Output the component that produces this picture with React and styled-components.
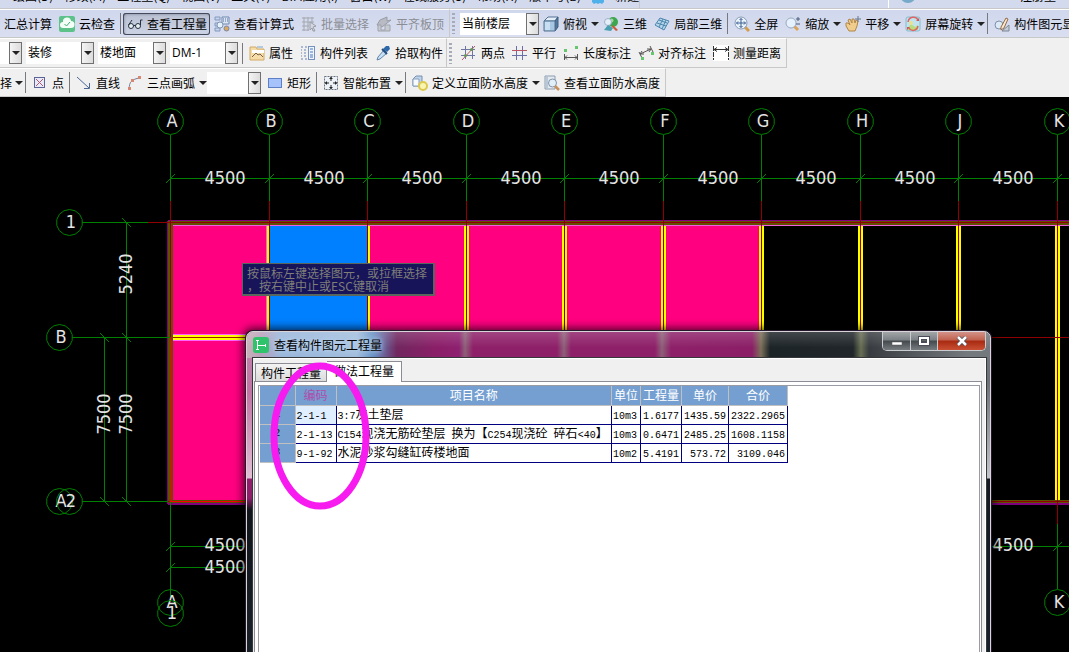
import React, { useState } from 'react'
import styled, { createGlobalStyle, css } from 'styled-components'

const GlobalStyle = createGlobalStyle`
    * {
        box-sizing: border-box;
    }

    body {
        margin: 0;
        overflow: hidden;
        background-color: #000;
        color: #000;
        font-family: "Noto Sans CJK SC", sans-serif;
        font-size: 12px;
        line-height: 16px;
    }

    button, select {
        font: inherit;
        color: inherit;
    }
`

const Page = styled.div`
    display: flex;
    flex-direction: column;
    height: 100vh;
`

const MenuBar = styled.nav`
    display: flex;
    align-items: stretch;
    height: 9px;
    overflow: hidden;
    background-color: #d4daed;
    border-bottom: 1px solid #c8c8c8;
`

const MenuGroup = styled.div`
    display: flex;
    align-items: flex-end;
    gap: 11px;
    padding: 0 0 4px 13px;
    border-right: 1px solid #c8c8c8;
`

const SideMenu = styled.div`
    display: flex;
    align-items: flex-end;
    gap: 104px;
    margin-left: auto;
    padding: 0 13px 4px 11px;
    border-left: 1px solid #fff;
`

const MenuItem = styled.a`
    color: #000;
    text-decoration: none;
    white-space: nowrap;
`

const ToolRow = styled.div`
    display: flex;
    flex: none;
    height: ${props => props.$tall ? '30px' : '29px'};
    overflow: hidden;
    background: ${props => props.$blue ? 'linear-gradient(#cfd7ed, #dadff0)' : '#f0f0f0'};
`

const ToolGroup = styled.div`
    display: flex;
    flex: none;
    align-items: center;
    padding-right: ${props => props.$end || '2px'};
    border-top: 1px solid #fff;
    border-right: 1px solid #c8c8c8;
    border-bottom: 1px solid #c8c8c8;
`

const Grip = styled.div`
    width: 3px;
    height: 21px;
    margin: 0 5px 0 2px;
    background: repeating-linear-gradient(#a5abb8 0 2px, transparent 2px 4px);
`

const Separator = styled.div`
    width: 1px;
    height: 21px;
    margin: 0 2px;
    background-color: #77797f;
`

const ToolButton = styled.button`
    display: flex;
    flex: none;
    align-items: center;
    gap: 4px;
    height: 22px;
    padding: 0 3px 0 4px;
    border: none;
    border-radius: 3px;
    background: none;
    white-space: nowrap;

    ${props => props.$menu && css`
        padding-right: 0;
    `}

    ${props => props.disabled && css`
        color: #8b8d94;
    `}

    ${props => props.$pressed && css`
        background: linear-gradient(#b9c0d2, #cdd4e6);
        box-shadow: inset 0 0 0 1px #454b5a, inset 1px 1px 3px #7d8496;
    `}
`

const EdgeButton = styled(ToolButton)`
    gap: 3px;
    margin-left: -16px;
`

const Arrow = styled.span`
    border: 4px solid transparent;
    border-top-color: #222;
    border-bottom: none;
`

const SelectBox = styled.span`
    position: relative;
    display: flex;
    flex: none;
    width: ${props => props.$width || '68px'};
    height: 22px;
    margin-right: ${props => props.$gap || '4px'};
    background-color: #fff;
`

const Select = styled.select`
    appearance: none;
    width: 100%;
    padding: 0 14px 0 2px;
    border: none;
    background: none;
    font-family: "Open Sans", "Noto Sans CJK SC", sans-serif;
    outline: none;
`

const SelectArrow = styled.span`
    position: absolute;
    top: 0;
    right: 0;
    bottom: 0;
    display: flex;
    align-items: center;
    justify-content: center;
    width: 13px;
    border: 1px solid #707070;
    background: linear-gradient(90deg, #f4f4f4, #dcdcdc);
    pointer-events: none;
`

const Canvas = styled.main`
    position: relative;
    flex: 1;
    overflow: hidden;
    background-color: #000;
`

const Drawing = styled.svg`
    display: block;
    width: 100%;
    height: 100%;
    font-family: "DejaVu Sans Condensed", "DejaVu Sans", sans-serif;
    font-size: 18px;
`

const Hint = styled.div`
    position: absolute;
    left: 242px;
    top: 166px;
    padding: 2px 6px 2px 4px;
    border: 1px solid #59665e;
    border-right-width: 2px;
    border-bottom-width: 2px;
    background-color: #18145a;
    color: #7f7f78;
    line-height: 13px;
    white-space: pre;
`

const Dialog = styled.section`
    position: absolute;
    left: 246px;
    right: 78px;
    top: 234px;
    bottom: -10px;
    display: flex;
    flex-direction: column;
    padding: 0 4px 0 6px;
    border: 1px solid #d9d4da;
    border-radius: 7px 7px 0 0;
    background:
        linear-gradient(#bf86ad, #c074a3 60px, #e2bfd5 146px, #8f1f6b 147px, #8f1f6b 166px, #10151b 178px, #1a2229) 0 0 / 7px 100% no-repeat,
        linear-gradient(#777c80, #6b7175 50px, #c3c6c8 146px, #131a20 147px, #18222b) 100% 0 / 6px 100% no-repeat,
        #6b7074;
    box-shadow: 0 0 0 1px #24182a, 0 0 9px 3px rgba(0, 0, 0, .7);
`

const TitleBar = styled.header`
    display: flex;
    align-items: flex-start;
    height: 26px;
    margin: 0 -4px 0 -6px;
    border-radius: 6px 6px 0 0;
    background:
        linear-gradient(rgba(255, 255, 255, .16), rgba(255, 255, 255, 0) 60%),
        linear-gradient(90deg, #c8b0b8 0, #b9a0bb 14px, #98b5da 34px, #a2bddd 110px, #648fc4 126px, #71275f 150px,
            #8b1e68 190px, #8e2070 212px, #8d6078 218px, #8e2069 226px, #8e2069 310px, #8d6078 317px, #8e2069 324px,
            #8e2069 408px, #8d6078 415px, #8e2069 424px, #8b1e66 505px, #7b7059 514px, #1d2428 523px, #20262a 606px,
            #686f54 614px, #383c40 622px, #74797d 720px);
`

const TitleIcon = styled.svg`
    width: 16px;
    height: 16px;
    margin: 5px 5px 0 6px;
`

const Title = styled.h1`
    flex: 1;
    margin: 5px 0 0;
    font-size: 12px;
    font-weight: 400;
    text-shadow: 0 0 5px #c9def2, 0 0 8px #b6d2ef;
`

const WindowButtons = styled.div`
    display: flex;
    height: 19px;
    margin-right: 4px;
    border: 1px solid #c9cdd0;
    border-top: none;
    border-radius: 0 0 5px 5px;
    overflow: hidden;
`

const WindowButton = styled.button`
    display: flex;
    align-items: center;
    justify-content: center;
    width: ${props => props.$close ? '48px' : '27px'};
    padding: 0;
    border: none;
    border-left: ${props => props.$first ? 'none' : '1px solid #c9cdd0'};
    background: ${props => props.$close
        ? 'linear-gradient(#d39388, #c0614e 45%, #a82a10 50%, #c95034)'
        : 'linear-gradient(#a2a6a9, #7b8084 45%, #44494e 50%, #777c80)'};
`

const DialogBody = styled.div`
    display: flex;
    flex: 1;
    flex-direction: column;
    padding: 2px 3px 0 0;
    border: 1px solid #fff;
    border-left-color: #eee;
    outline: 1px solid #35373b;
    background-color: #f0f0f0;
`

const Tabs = styled.div`
    display: flex;
    align-items: flex-end;
    height: 20px;
    padding-left: 1px;
`

const Tab = styled.button`
    height: ${props => props.$active ? '21px' : '18px'};
    margin-bottom: ${props => props.$active ? '-1px' : '0'};
    padding: ${props => props.$active ? '0 7px 2px' : '0 5px'};
    border: 1px solid #8c8c94;
    border-left-width: ${props => props.$active ? '0' : '1px'};
    border-bottom: none;
    background: ${props => props.$active ? '#fff' : 'linear-gradient(#f3f3f3, #dcdcdc)'};
    line-height: 16px;
    z-index: ${props => props.$active ? 1 : 0};
`

const Pane = styled.div`
    flex: 1;
    padding: 3px 1px 0 3px;
    border: 1px solid #8c8c94;
    background-color: #fff;
`

const GridFrame = styled.div`
    height: 100%;
    padding: 0 1px;
    border: 1px solid #9b9ba3;
`

const Table = styled.table`
    border-collapse: collapse;
    table-layout: fixed;
    width: 528px;
`

const HeadCell = styled.th`
    height: 19px;
    padding: 0;
    border-right: 1px solid #c0c0c0;
    border-bottom: 1px solid #c0c0c0;
    background-color: #759fd1;
    color: ${props => props.$marked ? '#b04cab' : '#fff'};
    font-weight: 400;
    line-height: 18px;
    white-space: nowrap;
`

const RowHead = styled(HeadCell)`
    color: #000;
    font-family: "Liberation Mono", monospace;
    font-size: 10px;
`

const Cell = styled.td`
    height: 19px;
    padding: 0 2px 2px 1px;
    border-right: 1px solid #000080;
    border-bottom: 1px solid #000080;
    background-color: ${props => props.$selected ? '#e0efff' : '#fff'};
    line-height: 16px;
    text-align: ${props => props.$right ? 'right' : 'left'};
    white-space: pre;
`

const Mono = styled.span`
    font-family: "Liberation Mono", monospace;
    font-size: 10px;
    line-height: 10px;
`

const Marker = styled.svg`
    position: absolute;
    left: 270px;
    top: 265px;
    z-index: 2;
    width: 100px;
    height: 148px;
    pointer-events: none;
`

const icons = {
    cloud: <><rect width="16" height="16" rx="2" fill="#5cc28a" /><path d="M4 12a3 3 0 0 1 0-6 4 4 0 0 1 8-1 3.500 3.500 0 0 1 0 7z" fill="#f4fff8" /><path d="M5.500 8l2 2 3.500-4" stroke="#42ad75" fill="none" /></>,
    glasses: <><circle cx="4" cy="10" r="2.500" fill="#e8f2f5" stroke="#27303d" /><circle cx="11" cy="10" r="2.500" fill="#e8f2f5" stroke="#27303d" /><path d="M6.500 9.500h2M1.500 9L5 4M13.500 9V4h2" stroke="#27303d" fill="none" /></>,
    formula: <><path d="M1 1h5v3H1zM1 7h3v3H1zM1 12h5v3H1z" fill="#c5d4ea" stroke="#8298bd" /><path d="M8 1h7v7H8z" fill="#dce6f4" stroke="#6f88ae" /><path d="M9 3h5M9 5h5" stroke="#536f9c" strokeDasharray="1 1" /><circle cx="6" cy="9" r="3" fill="#e6f2fa" stroke="#7f97b7" /><circle cx="12.500" cy="12.500" r="2.500" fill="#d9a861" stroke="#7d89a0" /></>,
    batch: <><path d="M1 2h12M1 6h12M1 10h7M1 14h7M3 1v14M7 1v14M11 1v6" stroke="#a4a7af" fill="none" /><path d="M9 6l6 4-3 1 2 4-2 0-1-3-2 2z" fill="#d5d8e0" stroke="#9a9da5" /></>,
    align: <><path d="M1 9l3-5 7-3v4l4-1-9 7z" fill="#b8bbc3" stroke="#9a9da5" /><path d="M2 15V9h3v5h4V9h5v6z" fill="#c7cad2" stroke="#a0a3ab" /></>,
    cube: <><path d="M1 5l4-4h10l-3 4z" fill="#e2effb" stroke="#54708f" /><path d="M12 5l3-4v10l-3 4z" fill="#4f789f" stroke="#3f5f80" /><path d="M1 5h11v10H1z" fill="#a6c6e4" stroke="#54708f" /><path d="M2 6h5v8H2z" fill="#c8def2" /></>,
    three: <><circle cx="10" cy="6" r="5" fill="#3ea650" /><circle cx="8.500" cy="4.500" r="2" fill="#9ddc98" /><circle cx="5" cy="6" r="3.500" fill="#e6eef8" stroke="#9db1c8" /><path d="M1 14l4-5 5 3-2 3z" fill="#4b9fb0" /><path d="M10 9l5 5-2 1-4-4z" fill="#cb5c36" /></>,
    partial: <><path d="M1 9l5-7 9 3-5 9z" fill="#b4d5ea" stroke="#4e86ad" /><path d="M3 7l9 3M5 4l8 3M9 3l-4 8M12 4l-4 9" stroke="#4e86ad" fill="none" /></>,
    full: <><path d="M11 11l4 4" stroke="#d49c4f" strokeWidth="3" /><circle cx="7" cy="7" r="6" fill="#e9f4fd" stroke="#8b9cb5" /><path d="M7 2.500v9M2.500 7h9M5.500 4L7 2.500 8.500 4M5.500 10L7 11.500 8.500 10M4 5.500L2.500 7 4 8.500M10 5.500L11.500 7 10 8.500" stroke="#3d5f91" fill="none" /></>,
    zoom: <><path d="M9 10l4 4" stroke="#d9a45c" strokeWidth="3" /><circle cx="6" cy="7" r="5" fill="#e5f1fc" stroke="#9ba9bd" /><path d="M11 3h4M13 1v4M11 8h4" stroke="#4b5c78" /></>,
    pan: <><path d="M4 15L1 10l0-3 2 0 2 2-2-5 2-1 2 4 0-4 2 0 1 4 1-3 2 1-1 5-2 5z" fill="#f0cd8c" stroke="#b18647" /><path d="M10 3h6M13 0v6" stroke="#66768f" /></>,
    rotate: <><rect x="1" y="1" width="14" height="14" rx="2" fill="#bfe3ef" stroke="#82bdd0" /><path d="M2 13l4-5 4 3 3-2v5H2z" fill="#b9dc7d" /><circle cx="6" cy="7" r="2" fill="#efe08c" /><path d="M3 6c1-6 8-6 10-2M13 10c-1 5-7 6-9 2" stroke="#e06464" fill="none" strokeWidth="1.500" /><path d="M11 5h3V2zM5 11H2v3z" fill="#d95353" /></>,
    show: <><circle cx="5" cy="9" r="4" fill="#dceaf7" stroke="#7e91aa" /><path d="M7 11l5-9 2 1-4 9-3 2z" fill="#f6e8cd" stroke="#956747" /><path d="M8 15h7V9z" fill="#c3ccd8" stroke="#7d8794" /></>,
    props: <><path d="M1 2h6l1 2h7v11H1z" fill="#f5dca8" stroke="#d1aa69" /><path d="M3 5h12v3H3z" fill="#fff" /><path d="M3 12l4-4 2 2 2-1 3 3" stroke="#75644c" fill="none" /><path d="M8 1h6v2H8z" fill="#b5cadf" /></>,
    list: <><path d="M1 2h2M5 2h2M1 5h1M1 8h1M1 11h1M1 14h2M5 14h2M4 5h2M4 8h2M4 11h2" stroke="#6483b3" /><rect x="8.500" y="1.500" width="6" height="13" fill="#eef5ff" stroke="#7890bc" /><path d="M10 4h3M10 7h3M10 10h3M10 12h3" stroke="#4878bd" /></>,
    picker: <><path d="M9 5l3 3-7 6-3 1 1-3z" fill="#c8e0f3" stroke="#6285ab" /><path d="M8 4l3-3 3 0 1 3-3 3z" fill="#2d69a9" /><path d="M7 4l5 5" stroke="#234f80" strokeWidth="2" /></>,
    twoPoint: <><path d="M4.500 1v13M11.500 1v13M0 4.500h14M0 10.500h14" stroke="#6f75a5" /><path d="M1 15L14 1" stroke="#bd5364" /><circle cx="4.500" cy="10.500" r="1.500" fill="#62984d" /><circle cx="10.500" cy="4.500" r="1.500" fill="#62984d" /></>,
    parallel: <><path d="M4.500 1v14M10.500 1v14" stroke="#6a70a7" /><path d="M0 5.500h15" stroke="#bc5363" /><path d="M0 10.500h15" stroke="#6a70a7" /></>,
    length: <><path d="M1.500 9v6M14.500 9v6M1 12.500h13M4 10.500l-2 2 2 2M12 10.500l2 2-2 2" stroke="#555" fill="none" /><path d="M1 4h3v3H1zM12 1h3v3h-3z" fill="#65c66d" /></>,
    alignDim: <><path d="M1 7l3 6M12 1l3 6M2 9l11-5M4 6L2 9l4 0M11 7l2-3-4 0" stroke="#555" fill="none" /><path d="M3 12h3v3H3zM13 7h3v3h-3z" fill="#65c66d" /></>,
    measure: <><rect width="16" height="16" fill="#fff" /><path d="M.500 1v14M15.500 1v14" stroke="#333" strokeDasharray="5 1" /><path d="M1 4.500h14M4 2.500l-3 2 3 2M12 2.500l3 2-3 2" stroke="#333" fill="none" /></>,
    point: <><rect x="2.500" y="2.500" width="10" height="10" fill="#e7eaf8" stroke="#5c6397" /><path d="M4 4l7 7M11 4l-7 7" stroke="#b2576c" /></>,
    line: <><path d="M1 2l12 11M13.500 8v5.500H8" stroke="#4e6696" fill="none" /></>,
    arc: <><path d="M2.500 14c-1-7 3-10 10-11" stroke="#737f95" fill="none" /><path d="M1 12h3v3H1zM4 4h3v3H4zM11 1h3v3h-3z" fill="#d78672" /></>,
    rect: <rect x="1.500" y="3.500" width="13" height="9" fill="#a6c2fa" stroke="#5d7fc5" />,
    smart: <><rect x="1.500" y="1.500" width="13" height="13" fill="#edf2f8" stroke="#68717e" strokeDasharray="2 1" /><path d="M8 2v4M8 10v4M2 8h4M10 8h4" stroke="#222" /><path d="M6 4l2-2 2 2zM6 12l2 2 2-2zM4 6L2 8l2 2zM12 6l2 2-2 2z" fill="#222" /></>,
    define: <><path d="M1 4l3-3h6v7l-3 3H1z" fill="#bfd4e8" stroke="#7590b1" /><path d="M1 4h6v7H1z" fill="#f7faff" stroke="#8aa0bc" /><circle cx="11" cy="11" r="4" fill="#f8f4b1" stroke="#dcc94c" strokeWidth="2" /></>,
    check: <><path d="M1 1h10v13H1z" fill="#e4eaf1" stroke="#8d9cae" /><path d="M2 2h2v11H2z" fill="#b9c8d9" /><circle cx="8.500" cy="8" r="4" fill="#e1eff9" stroke="#8293a8" /><path d="M11 11l4 4" stroke="#c99158" strokeWidth="2.500" /></>,
}

function Icon({ name }) {
    return <svg width="16" height="16" viewBox="0 0 16 16" aria-hidden="true">{icons[name]}</svg>
}

function Tool({ icon, label, menu, ...rest }) {
    return (
        <ToolButton type="button" $menu={menu} {...rest}>
            {icon && <Icon name={icon} />}
            {label}
            {menu && <Arrow />}
        </ToolButton>
    )
}

function Picker({ label, value, width, gap }) {
    return (
        <SelectBox $width={width} $gap={gap}>
            <Select aria-label={label} defaultValue={value}>
                <option value={value}>{value}</option>
            </Select>
            <SelectArrow><Arrow /></SelectArrow>
        </SelectBox>
    )
}

const menus = ['绘图(D)', '修改(M)', '工程量(Q)', '视图(V)', '工具(T)', 'BIM应用(I)', '窗口(W)', '在线服务(S)', '帮助(H)', '版本号(B)']

const axes = [
    { name: 'A', x: 170 }, { name: 'B', x: 269 }, { name: 'C', x: 367 }, { name: 'D', x: 466 }, { name: 'E', x: 564 },
    { name: 'F', x: 663 }, { name: 'G', x: 761 }, { name: 'H', x: 860 }, { name: 'J', x: 958 }, { name: 'K', x: 1057 },
]

const rows = [
    ['2-1-1', '3:7灰土垫层', '10m3', '1.6177', '1435.59', '2322.2965'],
    ['2-1-13', 'C154现浇无筋砼垫层 换为【C254现浇砼 碎石<40】', '10m3', '0.6471', '2485.25', '1608.1158'],
    ['9-1-92', '水泥砂浆勾缝缸砖楼地面', '10m2', '5.4191', '573.72', '3109.046'],
]

function Bubble({ x, y, children }) {
    const points = Array.from({ length: 14 }, (_, i) => {
        const a = (i * Math.PI) / 7 - Math.PI / 2
        return `${(x + 0.5 + 13 * Math.cos(a)).toFixed(1)},${(y + 0.5 + 13 * Math.sin(a)).toFixed(1)}`
    }).join(' ')
    return (
        <g>
            <polygon points={points} fill="none" stroke="#008000" />
            <text x={x + 2} y={y + 6} textAnchor="middle" fill="#e4e4e4">{children}</text>
        </g>
    )
}

function Dim({ x, y, children, vertical }) {
    return (
        <text x={x} y={y} textAnchor="middle" fill="#e4e4e4" transform={vertical ? `rotate(-90 ${x} ${y})` : undefined}>
            {children}
        </text>
    )
}

function Plan() {
    return (
        <Drawing role="img" aria-label="楼地面平面图">
            <g transform="translate(0 -97)">
                {/* rooms */}
                <path d="M171 223h591v280H171z" fill="#ff0080" />
                <path d="M269 223h98v280h-98z" fill="#0080ff" />

                {/* inner walls */}
                <path d="M171 334h591v7H171z" fill="#ff60ff" />
                <path d="M171 335h591v5H171z" fill="#ff0" />
                <path d="M171 337.500h591" stroke="#a02000" />
                <path d="M266 223h1v278h-1z" fill="#ff60ff" />
                <path d="M267 223h2v278h-2zM368 223h2v278h-2z" fill="#ff0" />
                {axes.slice(3).map(axis => (
                    <path key={axis.name} d={`M${axis.x - 2} 223h5v278h-5z`} fill="#ff0" />
                ))}

                {/* outer walls */}
                <path d="M168 220h901v1H168zM167 221h1v283h-1zM168 503h901v2H168z" fill="#800080" />
                <path d="M168 221h901v4H168zM168 221h5v282h-5zM168 500h901v3H168z" fill="#605000" />
                <path d="M173 225h896v1H173z" fill="#f060e0" />

                <path d="M148 222.500h921M991 337.500h78M168 501.500h901" stroke="#900000" />
                <path d="M170.500 337v165M171 501.500h80" stroke="#f00" />

                {/* axis bubbles and dimensions */}
                <path d="M170 178.500h899" stroke="#008000" />
                {axes.map(axis => (
                    <g key={axis.name}>
                        <path d={`M${axis.x + 0.5} 201v${axis.name === 'A' ? 136 : 300}`} stroke="#900000" />
                        <path d={`M${axis.x + 0.5} 135v66M${axis.x - 4} 183l9-9`} stroke="#008000" />
                        <Bubble x={axis.x} y={121}>{axis.name}</Bubble>
                    </g>
                ))}
                {axes.slice(0, -1).map(axis => <Dim key={axis.name} x={axis.x + 55} y={184}>4500</Dim>)}

                {/* left side */}
                <path d="M82 222.500h66M72 337.500h98M82 501.500h86M126.500 222v280M104.500 337v165" stroke="#008000" />
                <path d="M122 218l9 9M122 333l9 9M100 333l9 9M122 497l9 9M100 497l9 9" stroke="#008000" />
                <Bubble x={69} y={222}>1</Bubble>
                <Bubble x={59} y={337}>B</Bubble>
                <Bubble x={59} y={501}>A</Bubble>
                <Bubble x={69} y={501}>2</Bubble>
                <Dim x={132} y={274} vertical>5240</Dim>
                <Dim x={110} y={414} vertical>7500</Dim>
                <Dim x={132} y={414} vertical>7500</Dim>

                {/* bottom side */}
                <path d="M170.500 502v99M170 546.500h899M170 567.500h80M166 551l9-9M166 572l9-9" stroke="#008000" />
                <Dim x={225} y={551}>4500</Dim>
                <Dim x={225} y={573}>4500</Dim>
                <Bubble x={170} y={602}>A</Bubble>
                <Bubble x={170} y={613}>1</Bubble>
                <path d="M1057.500 501v23" stroke="#900000" />
                <path d="M1057.500 524v65M1053 551l9-9" stroke="#008000" />
                <Dim x={1013} y={551}>4500</Dim>
                <Bubble x={1057} y={602}>K</Bubble>
            </g>
        </Drawing>
    )
}

function MixedText({ children }) {
    return children.split(/([ -~]+)/).map((part, i) => (
        i % 2 ? <Mono key={i}>{part}</Mono> : part
    ))
}

function QuantityTable() {
    return (
        <Table>
            <colgroup>
                <col style={{ width: 35 }} />
                <col style={{ width: 41 }} />
                <col />
                <col style={{ width: 29 }} />
                <col style={{ width: 41 }} />
                <col style={{ width: 47 }} />
                <col style={{ width: 59 }} />
            </colgroup>
            <thead>
                <tr>
                    <HeadCell />
                    <HeadCell $marked>编码</HeadCell>
                    <HeadCell>项目名称</HeadCell>
                    <HeadCell>单位</HeadCell>
                    <HeadCell>工程量</HeadCell>
                    <HeadCell>单价</HeadCell>
                    <HeadCell>合价</HeadCell>
                </tr>
            </thead>
            <tbody>
                {rows.map((row, i) => (
                    <tr key={row[0]}>
                        <RowHead scope="row">{i + 1}</RowHead>
                        {row.map((value, col) => (
                            <Cell key={col} $right={col > 2} $selected={i === 0 && col === 0}>
                                <MixedText>{value}</MixedText>
                            </Cell>
                        ))}
                    </tr>
                ))}
            </tbody>
        </Table>
    )
}

function QuantityDialog() {
    const [tab, setTab] = useState(1)

    return (
        <Dialog role="dialog" aria-labelledby="dialog-title">
            <TitleBar>
                <TitleIcon viewBox="0 0 16 16" aria-hidden="true">
                    <rect width="16" height="16" rx="3" fill="#2fc36c" />
                    <path d="M4.500 3v10M3 3.500h3M3 12.500h3M5 8.500h7M12.500 7v3" stroke="#fff" fill="none" />
                </TitleIcon>
                <Title id="dialog-title">查看构件图元工程量</Title>
                <WindowButtons>
                    <WindowButton type="button" aria-label="最小化" $first>
                        <svg width="12" height="12"><path d="M1 7h10v3H1z" fill="#fff" stroke="#555" strokeWidth=".5" /></svg>
                    </WindowButton>
                    <WindowButton type="button" aria-label="最大化">
                        <svg width="12" height="10"><path d="M2 2h8v6H2z" fill="none" stroke="#4b4e5a" strokeWidth="4" /><path d="M2 2h8v6H2z" fill="none" stroke="#fff" strokeWidth="2" /></svg>
                    </WindowButton>
                    <WindowButton type="button" aria-label="关闭" $close>
                        <svg width="12" height="10"><path d="M2 1l8 8M10 1L2 9" stroke="#4b4e5a" strokeWidth="4" /><path d="M2 1l8 8M10 1L2 9" stroke="#fff" strokeWidth="2.500" /></svg>
                    </WindowButton>
                </WindowButtons>
            </TitleBar>
            <DialogBody>
                <Tabs role="tablist">
                    <Tab type="button" role="tab" aria-selected={tab === 0} $active={tab === 0} onClick={() => setTab(0)}>构件工程量</Tab>
                    <Tab type="button" role="tab" aria-selected={tab === 1} $active={tab === 1} onClick={() => setTab(1)}>做法工程量</Tab>
                </Tabs>
                <Pane>
                    <GridFrame>
                        <QuantityTable />
                    </GridFrame>
                </Pane>
            </DialogBody>
        </Dialog>
    )
}

function App() {
    return (
        <Page>
            <GlobalStyle />
            <MenuBar>
                <MenuGroup>
                    {menus.map(menu => <MenuItem key={menu} href="#">{menu}</MenuItem>)}
                    <svg width="12" height="12" aria-hidden="true"><path d="M0 0h12v10l-2 2-2-1-2 1-2-1-2 1-2-2z" fill="#4fb0ea" /></svg>
                    <MenuItem href="#">新建</MenuItem>
                </MenuGroup>
                <SideMenu>
                    <svg width="16" height="16" aria-hidden="true"><circle cx="8" cy="7" r="8" fill="#77a9c9" /></svg>
                    <MenuItem href="#">注册量</MenuItem>
                </SideMenu>
            </MenuBar>

            <ToolRow $blue>
                <ToolGroup>
                    <Tool label="汇总计算" />
                    <Tool icon="cloud" label="云检查" />
                    <Separator />
                    <Tool icon="glasses" label="查看工程量" $pressed aria-pressed="true" />
                    <Tool icon="formula" label="查看计算式" />
                    <Tool icon="batch" label="批量选择" disabled />
                    <Tool icon="align" label="平齐板顶" disabled />
                </ToolGroup>
                <ToolGroup>
                    <Grip />
                    <Picker label="楼层" value="当前楼层" width="79px" gap="0" />
                    <Tool icon="cube" label="俯视" menu />
                    <Tool icon="three" label="三维" />
                    <Tool icon="partial" label="局部三维" />
                    <Separator />
                    <Tool icon="full" label="全屏" />
                    <Tool icon="zoom" label="缩放" menu />
                    <Tool icon="pan" label="平移" menu />
                    <Tool icon="rotate" label="屏幕旋转" menu />
                    <Separator />
                    <Tool icon="show" label="构件图元显示设置" />
                </ToolGroup>
            </ToolRow>

            <ToolRow $tall>
                <ToolGroup $end="0">
                    <Picker label="当前层" value="" width="22px" />
                    <Picker label="构件类别" value="装修" />
                    <Picker label="构件类型" value="楼地面" />
                    <Picker label="构件" value="DM-1" gap="2px" />
                    <Separator />
                    <Tool icon="props" label="属性" />
                    <Tool icon="list" label="构件列表" />
                    <Tool icon="picker" label="拾取构件" />
                </ToolGroup>
                <ToolGroup>
                    <Grip />
                    <Tool icon="twoPoint" label="两点" />
                    <Tool icon="parallel" label="平行" />
                    <Tool icon="length" label="长度标注" />
                    <Tool icon="alignDim" label="对齐标注" />
                    <Tool icon="measure" label="测量距离" />
                </ToolGroup>
            </ToolRow>

            <ToolRow>
                <ToolGroup>
                    <EdgeButton type="button" $menu>选择<Arrow /></EdgeButton>
                    <Separator />
                    <Tool icon="point" label="点" />
                    <Separator />
                    <Tool icon="line" label="直线" />
                    <Tool icon="arc" label="三点画弧" menu />
                    <Picker label="画弧半径" value="" width="54px" gap="2px" />
                    <Tool icon="rect" label="矩形" />
                    <Separator />
                    <Tool icon="smart" label="智能布置" menu />
                    <Separator />
                    <Tool icon="define" label="定义立面防水高度" menu />
                    <Tool icon="check" label="查看立面防水高度" />
                </ToolGroup>
            </ToolRow>

            <Canvas>
                <Plan />
                <Hint>{'按鼠标左键选择图元，或拉框选择\n，按右键中止或ESC键取消'}</Hint>
                <QuantityDialog />
                <Marker viewBox="0 0 100 148" aria-hidden="true">
                    <ellipse cx="50" cy="74" rx="46" ry="70" fill="none" stroke="#f81bf0" strokeWidth="7" />
                </Marker>
            </Canvas>
        </Page>
    )
}

export default App
